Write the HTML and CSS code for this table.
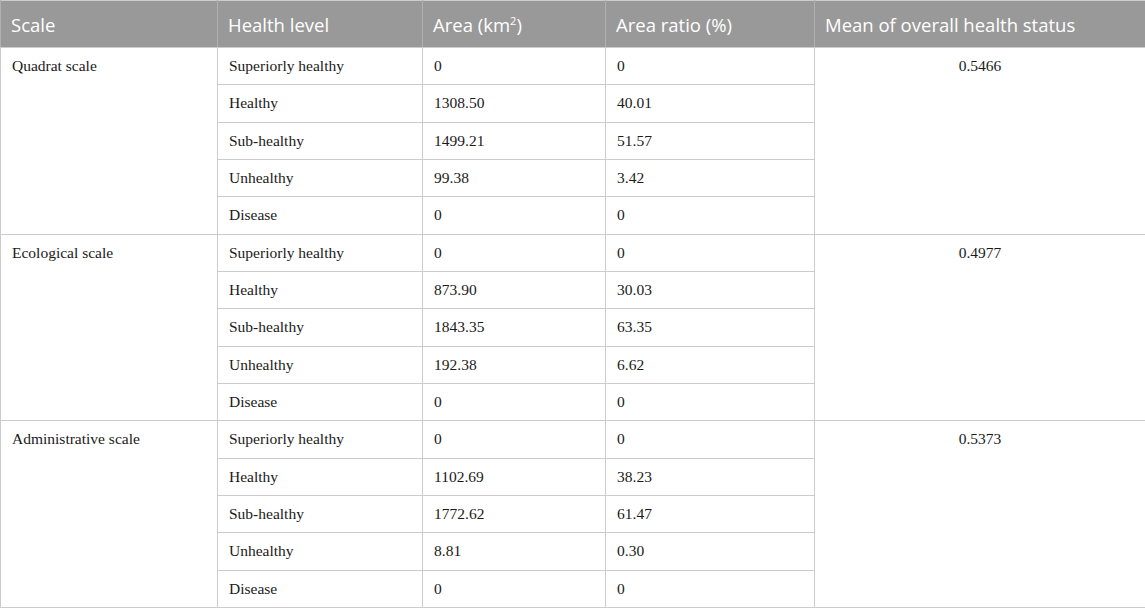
FILE: index.html
```html
<!DOCTYPE html>
<html>
<head>
<meta charset="utf-8">
<link rel="stylesheet" href="styles.css">
</head>
<body>
<table class="data">
  <colgroup>
    <col class="c1"><col class="c2"><col class="c3"><col class="c4"><col class="c5">
  </colgroup>
  <thead>
    <tr><th>Scale</th><th>Health level</th><th>Area (km<sup>2</sup>)</th><th>Area ratio (%)</th><th>Mean of overall health status</th></tr>
  </thead>
  <tbody>
    <tr><td rowspan="5">Quadrat scale</td><td>Superiorly healthy</td><td>0</td><td>0</td><td rowspan="5" class="mean">0.5466</td></tr>
    <tr><td>Healthy</td><td>1308.50</td><td>40.01</td></tr>
    <tr><td>Sub-healthy</td><td>1499.21</td><td>51.57</td></tr>
    <tr><td>Unhealthy</td><td>99.38</td><td>3.42</td></tr>
    <tr><td>Disease</td><td>0</td><td>0</td></tr>
    <tr><td rowspan="5">Ecological scale</td><td>Superiorly healthy</td><td>0</td><td>0</td><td rowspan="5" class="mean">0.4977</td></tr>
    <tr><td>Healthy</td><td>873.90</td><td>30.03</td></tr>
    <tr><td>Sub-healthy</td><td>1843.35</td><td>63.35</td></tr>
    <tr><td>Unhealthy</td><td>192.38</td><td>6.62</td></tr>
    <tr><td>Disease</td><td>0</td><td>0</td></tr>
    <tr><td rowspan="5">Administrative scale</td><td>Superiorly healthy</td><td>0</td><td>0</td><td rowspan="5" class="mean">0.5373</td></tr>
    <tr><td>Healthy</td><td>1102.69</td><td>38.23</td></tr>
    <tr><td>Sub-healthy</td><td>1772.62</td><td>61.47</td></tr>
    <tr><td>Unhealthy</td><td>8.81</td><td>0.30</td></tr>
    <tr><td>Disease</td><td>0</td><td>0</td></tr>
  </tbody>
</table>
</body>
</html>
```

FILE: styles.css
```css
html, body {
  margin: 0;
  padding: 0;
  background: #fff;
}
.data {
  width: 1145px;
  border-collapse: collapse;
  table-layout: fixed;
  border: 1px solid #cccccc;
}
.c1 { width: 217px; }
.c2 { width: 205px; }
.c3 { width: 183px; }
.c4 { width: 209px; }
.c5 { width: 331px; }
.data th {
  background: #999999;
  color: #ffffff;
  font-family: "Open Sans", "Noto Sans", sans-serif;
  font-weight: 400;
  font-size: 18.5px;
  text-align: left;
  height: 47px;
  padding: 0 10px;
  border-left: 1px solid #b0b0b0;
  border-right: 1px solid #b0b0b0;
  border-bottom: 1px solid #cccccc;
  box-sizing: border-box;
  vertical-align: middle;
}
.data th sup {
  font-size: 0.6em;
  line-height: 0;
}
.data td {
  font-family: "Liberation Serif", "Times New Roman", serif;
  font-size: 15.5px;
  color: #1a1a1a;
  height: 37.33px;
  padding: 8px 11px 0;
  border: 1px solid #cccccc;
  vertical-align: top;
  box-sizing: border-box;
  line-height: 20px;
}
.data td.mean {
  text-align: center;
}
```
